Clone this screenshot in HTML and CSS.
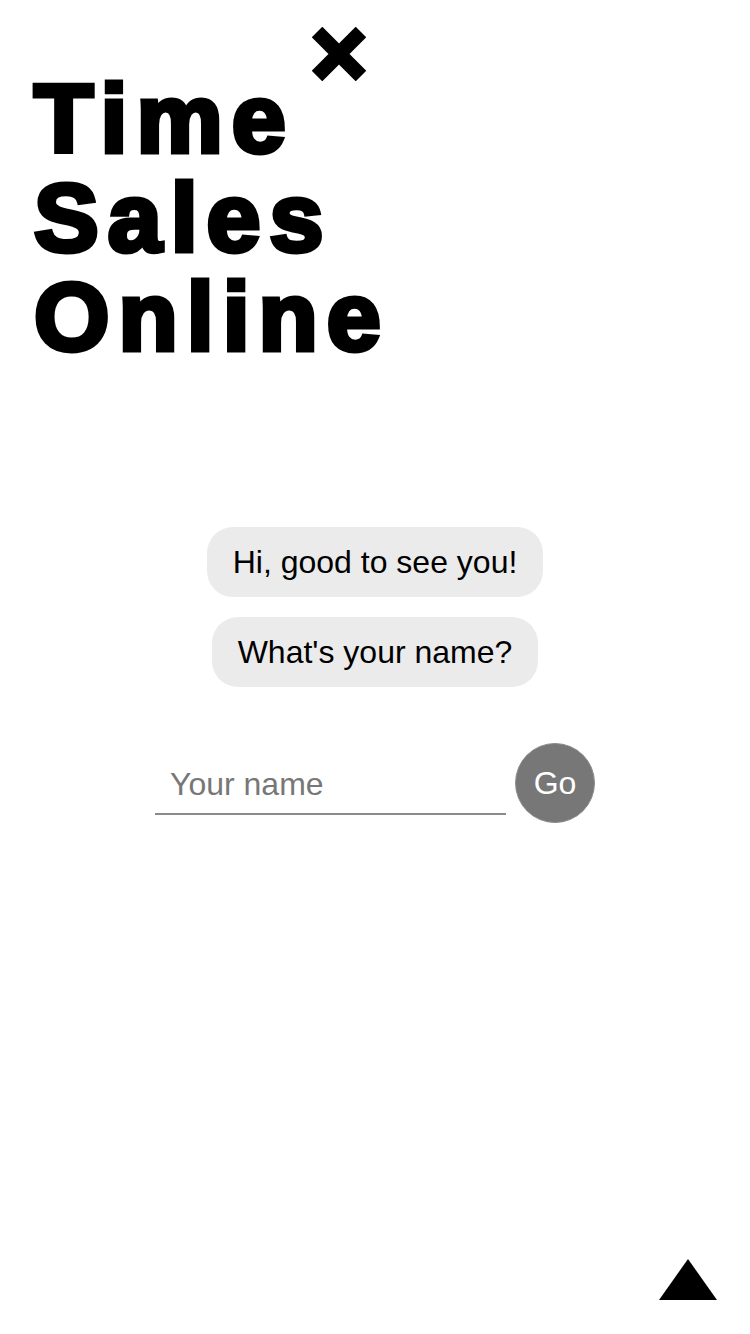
FILE: index.html
```html
<!DOCTYPE html>
<html>
<head>
<meta charset="utf-8">
<link rel="stylesheet" href="styles.css">
</head>
<body>
<div class="page">
  <header class="header">
    <h1 class="title">Time<br>Sales<br>Online</h1>
    <button class="close" aria-label="Close">
      <svg width="54" height="54" viewBox="0 0 54 54"><path d="M5 5 L49 49 M49 5 L5 49" stroke="#000" stroke-width="15" stroke-linecap="butt"/></svg>
    </button>
  </header>
  <main class="chat">
    <div class="bubble">Hi, good to see you!</div>
    <div class="bubble">What's your name?</div>
    <form class="name-row">
      <input class="name-input" type="text" placeholder="Your name">
      <button class="go" type="button">Go</button>
    </form>
  </main>
  <button class="up" aria-label="Up">
    <svg width="58" height="41" viewBox="0 0 58 41"><polygon points="29,0 58,41 0,41" fill="#000"/></svg>
  </button>
</div>
</body>
</html>
```
FILE: styles.css
```css
html, body { margin: 0; padding: 0; background: #fff; }
body { font-family: "Liberation Sans", Arial, sans-serif; color: #000; }
.page { position: relative; width: 750px; height: 1334px; overflow: hidden; }
.header { position: relative; padding: 69px 0 0 34px; }
.title {
  margin: 0;
  font-size: 97px;
  line-height: 99px;
  font-weight: 700;
  letter-spacing: 9px;
  -webkit-text-stroke: 5px #000;
}
.close {
  position: absolute; left: 312px; top: 27px;
  width: 54px; height: 54px; padding: 0; border: 0; background: none; display: block;
}
.close svg { display: block; }
.chat {
  display: flex; flex-direction: column; align-items: center;
  margin-top: 161px;
}
.bubble {
  background: #ebebeb;
  border-radius: 26px;
  font-size: 32px;
  line-height: 36px;
  padding: 17px 26px;
  margin-bottom: 20px;
}
.name-row {
  display: flex; align-items: center; gap: 9px;
  margin-top: 36px;
}
.name-input {
  width: 351px; height: 60px; box-sizing: border-box;
  border: 0; border-bottom: 2px solid #8a8a8a;
  padding: 0 0 0 15px; margin: 4px 0 0 0;
  font-family: "Liberation Sans", Arial, sans-serif; font-size: 32px;
  outline: none; background: transparent; color: #000;
}
.name-input::placeholder { color: #777; }
.go {
  width: 80px; height: 80px; border-radius: 50%;
  background: #777; border: 1px solid #8c8c8c; box-sizing: border-box;
  color: #fff; font-family: "Liberation Sans", Arial, sans-serif; font-size: 32px;
  padding: 0;
}
.up {
  position: absolute; right: 33px; bottom: 34px;
  width: 58px; height: 41px; padding: 0; border: 0; background: none;
}
.up svg { display: block; }
```
